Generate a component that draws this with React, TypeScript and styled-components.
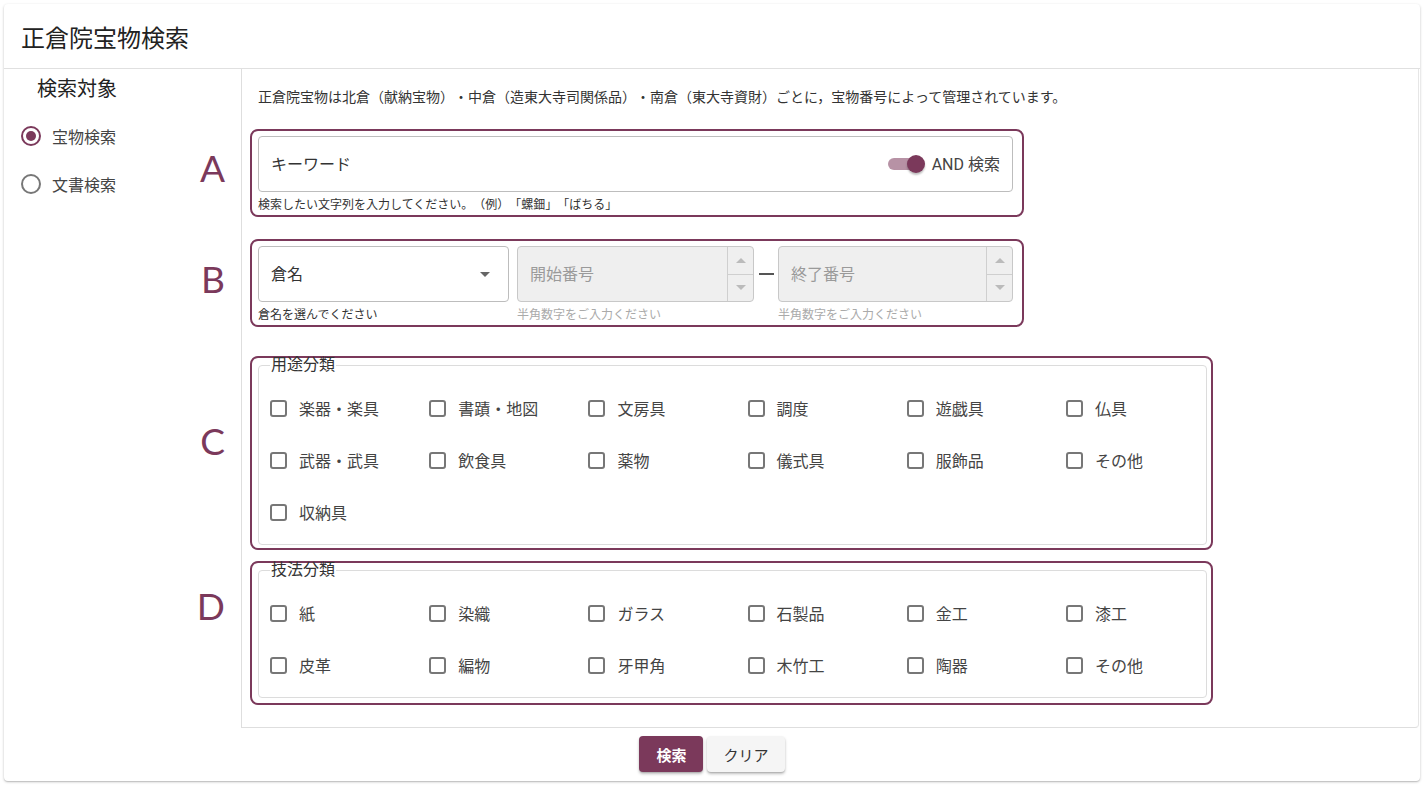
import React from 'react';
import styled, { createGlobalStyle } from 'styled-components';

const MAROON = '#7b395b';

const GlobalStyle = createGlobalStyle`
    body {
        margin: 0;
        background: #fff;
        font-family: Roboto, 'Noto Sans CJK JP', sans-serif;
        color: #333;
        text-spacing-trim: space-all;
    }
    * {
        box-sizing: border-box;
    }
`;

const Page = styled.div`
    padding: 4px;
`;

const Card = styled.div`
    width: 1416px;
    height: 777px;
    display: flex;
    flex-direction: column;
    background: #fff;
    border-radius: 4px;
    box-shadow: 0 1px 3px rgba(0, 0, 0, 0.2), 0 1px 1px rgba(0, 0, 0, 0.12);
`;

const Header = styled.header`
    height: 65px;
    display: flex;
    align-items: center;
    padding-left: 17px;
    border-bottom: 1px solid #e0e0e0;
    font-size: 24px;
    color: #222;
`;

const Body = styled.div`
    display: flex;
    height: 659px;
`;

const Side = styled.aside`
    width: 237px;
    padding: 6px 0 0 17px;
`;

const SideTitle = styled.div`
    margin-left: 16px;
    font-size: 20px;
    line-height: 28px;
    color: #222;
    margin-bottom: 9px;
`;

const RadioRow = styled.label`
    display: flex;
    align-items: center;
    height: 48px;
    gap: 11px;
    font-size: 16px;
    color: #444;
`;

const RadioCircle = styled.span<{ checked?: boolean }>`
    width: 20px;
    height: 20px;
    border-radius: 50%;
    border: 2px solid ${(p) => (p.checked ? MAROON : '#777')};
    display: flex;
    align-items: center;
    justify-content: center;

    &::after {
        content: '';
        width: 10px;
        height: 10px;
        border-radius: 50%;
        background: ${(p) => (p.checked ? MAROON : 'transparent')};
    }
`;

const Panel = styled.main`
    flex: 1;
    margin-right: 1px;
    padding: 18px 0 0 8px;
    border-left: 1px solid #dedede;
    border-right: 1px solid #e6e6e6;
    border-bottom: 1px solid #dedede;
    border-bottom-right-radius: 4px;
`;

const Desc = styled.p`
    margin: 0 0 0 8px;
    font-size: 14px;
    line-height: 20px;
    color: #333;
`;

const Box = styled.section<{ width: number; gap: number }>`
    position: relative;
    width: ${(p) => p.width}px;
    margin-top: ${(p) => p.gap}px;
    border: 2px solid ${MAROON};
    border-radius: 8px;
    padding: 5px 9px 2px 6px;
`;

const SetBox = styled(Box)<{ bottom?: number }>`
    padding: 0 4px ${(p) => p.bottom ?? 3}px 6px;
`;

const Letter = styled.span<{ top: number }>`
    position: absolute;
    right: calc(100% + 27px);
    top: ${(p) => p.top}px;
    font-family: Lato, 'Open Sans', sans-serif;
    font-size: 37px;
    line-height: 37px;
    color: ${MAROON};
`;

const Field = styled.div<{ disabled?: boolean }>`
    height: 56px;
    display: flex;
    align-items: center;
    border: 1px solid ${(p) => (p.disabled ? '#c8c8c8' : '#bdbdbd')};
    border-radius: 4px;
    background: ${(p) => (p.disabled ? '#efefef' : '#fff')};
    padding-left: 12px;
    font-size: 16px;
    color: ${(p) => (p.disabled ? '#9a9a9a' : '#333')};
`;

const FieldText = styled.span`
    flex: 1;
    margin-top: -2px;
`;

const Helper = styled.div<{ muted?: boolean }>`
    margin-top: 5px;
    font-size: 12px;
    line-height: 16px;
    color: ${(p) => (p.muted ? '#aaa' : '#333')};
    white-space: nowrap;
`;

const SwitchWrap = styled.span`
    position: relative;
    width: 37px;
    height: 18px;
    margin-right: 7px;
`;

const Track = styled.span`
    position: absolute;
    left: 0;
    top: 3px;
    width: 32px;
    height: 12px;
    border-radius: 6px;
    background: rgba(123, 57, 91, 0.55);
`;

const Thumb = styled.span`
    position: absolute;
    right: 0;
    top: 0;
    width: 18px;
    height: 18px;
    border-radius: 50%;
    background: ${MAROON};
    box-shadow: 0 2px 2px rgba(0, 0, 0, 0.25);
`;

const SwitchLabel = styled.span`
    margin-right: 12px;
    margin-top: -2px;
    color: #444;
`;

const Row = styled.div`
    display: flex;
    align-items: flex-start;
`;

const Col = styled.div<{ width: number }>`
    width: ${(p) => p.width}px;
`;

const Dash = styled.span`
    width: 24px;
    height: 56px;
    display: flex;
    align-items: center;
    justify-content: center;

    &::after {
        content: '';
        width: 15px;
        height: 1.5px;
        background: #555;
    }
`;

const Spinner = styled.span`
    width: 26px;
    align-self: stretch;
    display: flex;
    flex-direction: column;
    border-left: 1px solid #cfcfcf;
`;

const SpinBtn = styled.span<{ down?: boolean }>`
    flex: 1;
    display: flex;
    align-items: center;
    justify-content: center;
    border-top: ${(p) => (p.down ? '1px solid #cfcfcf' : 'none')};

    &::after {
        content: '';
        border-left: 5px solid transparent;
        border-right: 5px solid transparent;
        ${(p) => (p.down ? 'border-top' : 'border-bottom')}: 5px solid #bbb;
    }
`;

const Fieldset = styled.fieldset`
    margin: 0;
    min-width: 0;
    border: 1px solid #dcdcdc;
    border-radius: 4px;
    padding: 10px 0 6px 11px;
`;

const Legend = styled.legend`
    padding: 0 1px;
    font-size: 16px;
    line-height: 14px;
    color: #333;
`;

const CheckGrid = styled.div`
    display: grid;
    grid-template-columns: repeat(6, 159.2px);
    grid-auto-rows: 52px;
`;

const CheckItem = styled.label`
    display: flex;
    align-items: center;
    gap: 12px;
    font-size: 16px;
    color: #444;
    white-space: nowrap;
`;

const CheckBoxIcon = styled.span`
    width: 17px;
    height: 17px;
    border: 2px solid #777;
    border-radius: 3px;
`;

const Footer = styled.footer`
    flex: 1;
    display: flex;
    justify-content: center;
    align-items: flex-start;
    gap: 4px;
    padding-top: 8px;
`;

const Button = styled.button<{ primary?: boolean }>`
    height: 36px;
    min-width: 64px;
    padding: 0 16px;
    border: none;
    border-radius: 4px;
    font-family: Roboto, 'Noto Sans CJK JP', sans-serif;
    font-size: 15px;
    font-weight: ${(p) => (p.primary ? 700 : 400)};
    color: ${(p) => (p.primary ? '#fff' : '#333')};
    background: ${(p) => (p.primary ? MAROON : '#f5f5f5')};
    box-shadow: 0 2px 3px rgba(0, 0, 0, 0.25), 0 1px 1px rgba(0, 0, 0, 0.1);
`;

const useList = [
    '楽器・楽具', '書蹟・地図', '文房具', '調度', '遊戯具', '仏具',
    '武器・武具', '飲食具', '薬物', '儀式具', '服飾品', 'その他',
    '収納具',
];

const techList = [
    '紙', '染織', 'ガラス', '石製品', '金工', '漆工',
    '皮革', '編物', '牙甲角', '木竹工', '陶器', 'その他',
];

function CheckSet({ title, items }: { title: string; items: string[] }) {
    return (
        <Fieldset>
            <Legend>{title}</Legend>
            <CheckGrid>
                {items.map((item, i) => (
                    <CheckItem key={i}>
                        <CheckBoxIcon />
                        {item}
                    </CheckItem>
                ))}
            </CheckGrid>
        </Fieldset>
    );
}

function NumberField({ placeholder }: { placeholder: string }) {
    return (
        <Field disabled>
            <FieldText>{placeholder}</FieldText>
            <Spinner>
                <SpinBtn />
                <SpinBtn down />
            </Spinner>
        </Field>
    );
}

export default function App() {
    return (
        <Page>
            <GlobalStyle />
            <Card>
                <Header>正倉院宝物検索</Header>
                <Body>
                    <Side>
                        <SideTitle>検索対象</SideTitle>
                        <RadioRow>
                            <RadioCircle checked />
                            宝物検索
                        </RadioRow>
                        <RadioRow>
                            <RadioCircle />
                            文書検索
                        </RadioRow>
                    </Side>
                    <Panel>
                        <Desc>
                            正倉院宝物は北倉（献納宝物）・中倉（造東大寺司関係品）・南倉（東大寺資財）ごとに，宝物番号によって管理されています。
                        </Desc>

                        <Box width={774} gap={22}>
                            <Letter top={18}>A</Letter>
                            <Field>
                                <FieldText>キーワード</FieldText>
                                <SwitchWrap>
                                    <Track />
                                    <Thumb />
                                </SwitchWrap>
                                <SwitchLabel>AND 検索</SwitchLabel>
                            </Field>
                            <Helper>検索したい文字列を入力してください。（例）「螺鈿」「ばちる」</Helper>
                        </Box>

                        <Box width={774} gap={22}>
                            <Letter top={19}>B</Letter>
                            <Row>
                                <Col width={251}>
                                    <Field>
                                        <FieldText>倉名</FieldText>
                                        <svg width="24" height="24" viewBox="0 0 24 24" style={{ marginRight: 11 }}>
                                            <path d="M7 10l5 5 5-5z" fill="#666" />
                                        </svg>
                                    </Field>
                                    <Helper>倉名を選んでください</Helper>
                                </Col>
                                <Col width={8} />
                                <Col width={237}>
                                    <NumberField placeholder="開始番号" />
                                    <Helper muted>半角数字をご入力ください</Helper>
                                </Col>
                                <Dash />
                                <Col width={235}>
                                    <NumberField placeholder="終了番号" />
                                    <Helper muted>半角数字をご入力ください</Helper>
                                </Col>
                            </Row>
                        </Box>

                        <SetBox width={963} gap={29}>
                            <Letter top={64}>C</Letter>
                            <CheckSet title="用途分類" items={useList} />
                        </SetBox>

                        <SetBox width={963} gap={11} bottom={5}>
                            <Letter top={24}>D</Letter>
                            <CheckSet title="技法分類" items={techList} />
                        </SetBox>
                    </Panel>
                </Body>
                <Footer>
                    <Button primary>検索</Button>
                    <Button>クリア</Button>
                </Footer>
            </Card>
        </Page>
    );
}
